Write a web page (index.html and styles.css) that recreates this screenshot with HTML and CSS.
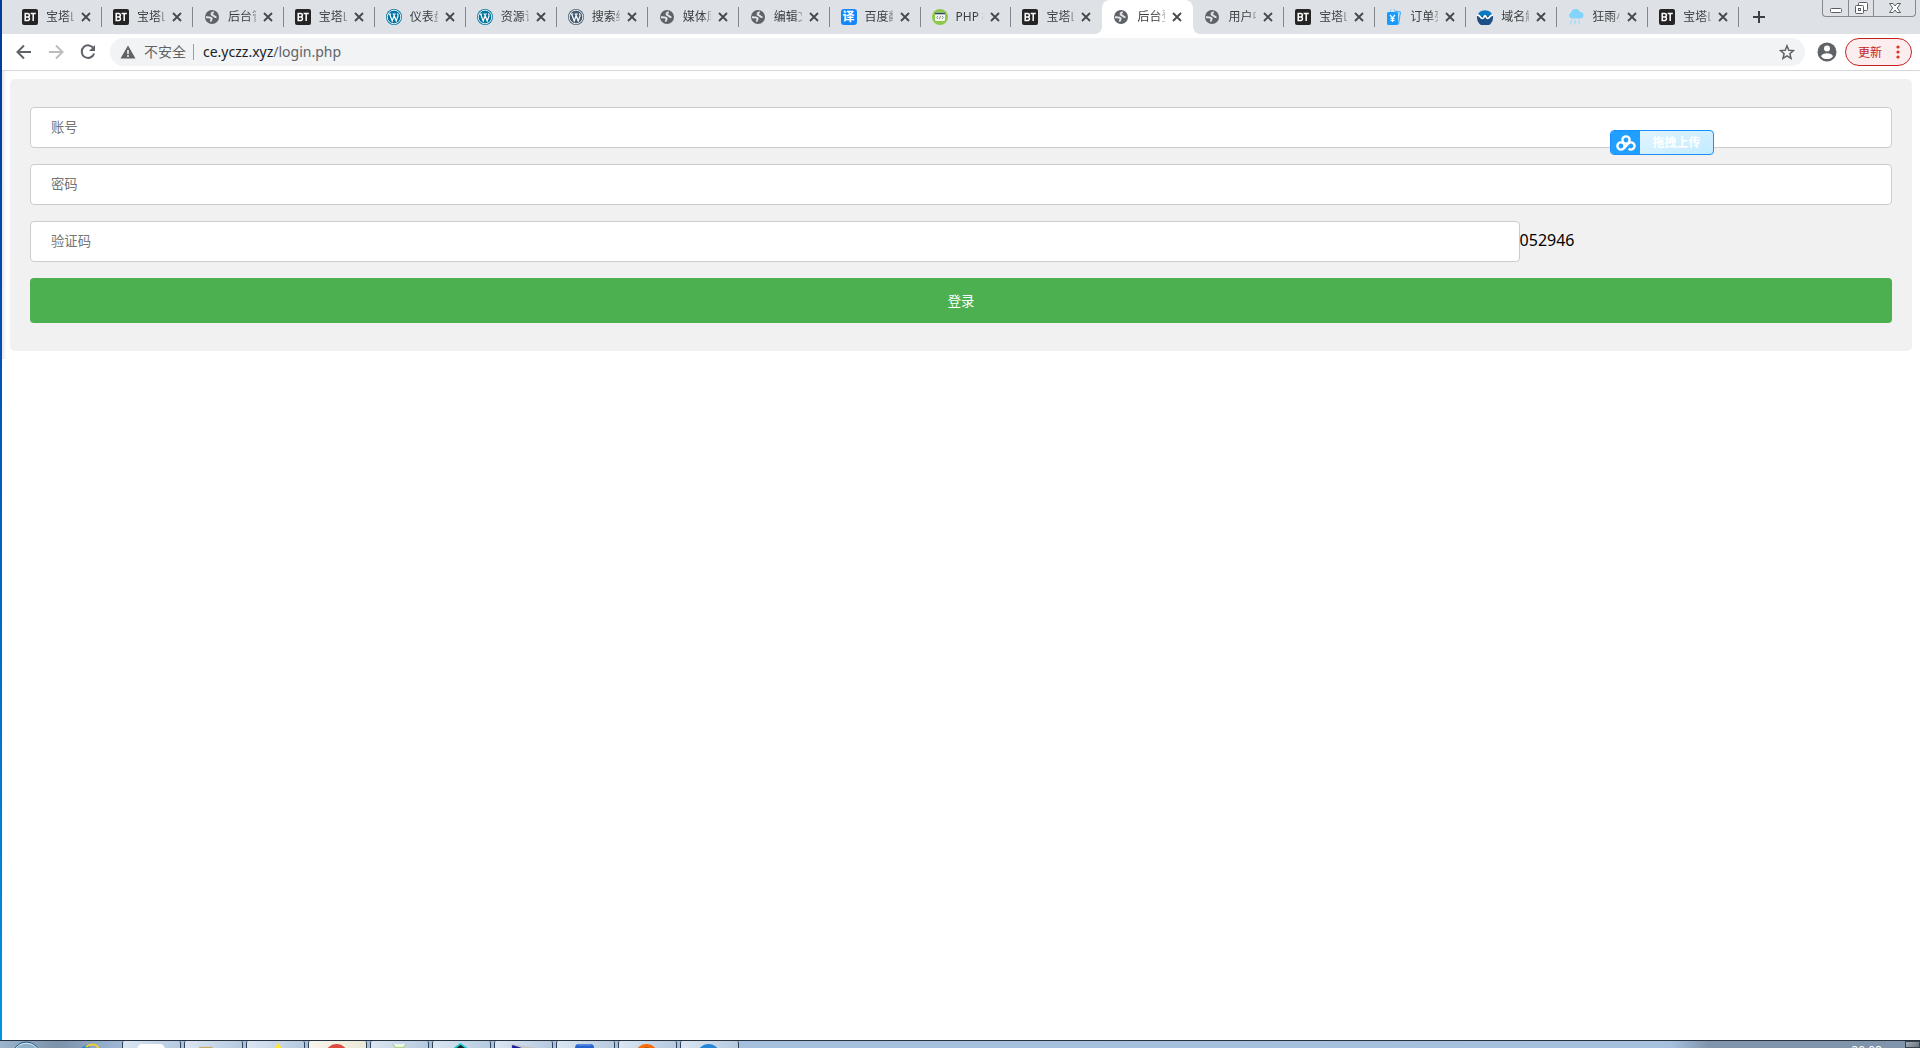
FILE: index.html
```html
<!DOCTYPE html>
<html lang="zh-CN">
<head>
    <meta charset="UTF-8">
    <meta name="viewport" content="width=device-width, initial-scale=1.0">
    <title>后台登录</title>
    <link rel="stylesheet" href="styles.css">
</head>
<body>
    <!-- shared icons -->
    <svg class="sprite" aria-hidden="true">
        <symbol id="bt" viewBox="0 0 16 16">
            <rect width="16" height="16" rx="2" fill="#242424"/>
            <path d="M3.2 4.5v7h2.2a1.8 1.8 0 0 0 .5-3.6a1.7 1.7 0 0 0-.5-3.4zM3.4 8h2.4M8.6 4.5h5.2M11.2 4.5v7.4" fill="none" stroke="#fff" stroke-width="1.5"/>
        </symbol>
        <symbol id="globe" viewBox="0 0 16 16">
            <circle cx="8" cy="8" r="7" fill="#5f6368"/>
            <path d="M9.800 3.200C7.200 3.600 6.800 5.800 8.800 6.200c1.700.3.900 2 3.700 1.900" fill="none" stroke="#e4e6ea" stroke-width="1.900"/>
            <path d="M2 8.300c2.400-.1 5-.2 5.600 1.100.4 1.300-1 1.300-.8 3.300" fill="none" stroke="#e4e6ea" stroke-width="1.900"/>
        </symbol>
        <symbol id="wp" viewBox="0 0 16 16">
            <circle cx="8" cy="8" r="8" fill="currentColor"/>
            <circle cx="8" cy="8" r="6.800" fill="none" stroke="#fff" stroke-width=".9"/>
            <path d="M2.200 5h3M6.600 5h3.200M3.700 5.200l2.500 6.800L8 7M7.700 5.200l2.500 6.800 1.800-5c.3-1-.6-1.600-.5-2.600" fill="none" stroke="#fff" stroke-width="1.200"/>
        </symbol>
        <symbol id="close" viewBox="0 0 16 16">
            <path d="M4 4l8 8M12 4l-8 8" stroke="#45494d" stroke-width="1.800"/>
        </symbol>
    </svg>

    <div class="window">
        <header class="browser">
            <div class="tab-strip">
                <nav class="tabs">
                    <div class="tab"><svg class="favicon"><use href="#bt"/></svg><a href="#">宝塔Linux面板</a><button aria-label="关闭"><svg><use href="#close"/></svg></button></div>
                    <div class="tab"><svg class="favicon"><use href="#bt"/></svg><a href="#">宝塔Linux面板</a><button aria-label="关闭"><svg><use href="#close"/></svg></button></div>
                    <div class="tab"><svg class="favicon"><use href="#globe"/></svg><a href="#">后台管理</a><button aria-label="关闭"><svg><use href="#close"/></svg></button></div>
                    <div class="tab"><svg class="favicon"><use href="#bt"/></svg><a href="#">宝塔Linux面板</a><button aria-label="关闭"><svg><use href="#close"/></svg></button></div>
                    <div class="tab"><svg class="favicon wp-blue"><use href="#wp"/></svg><a href="#">仪表盘</a><button aria-label="关闭"><svg><use href="#close"/></svg></button></div>
                    <div class="tab"><svg class="favicon wp-blue"><use href="#wp"/></svg><a href="#">资源订阅</a><button aria-label="关闭"><svg><use href="#close"/></svg></button></div>
                    <div class="tab"><svg class="favicon wp-gray"><use href="#wp"/></svg><a href="#">搜索结果</a><button aria-label="关闭"><svg><use href="#close"/></svg></button></div>
                    <div class="tab"><svg class="favicon"><use href="#globe"/></svg><a href="#">媒体库</a><button aria-label="关闭"><svg><use href="#close"/></svg></button></div>
                    <div class="tab"><svg class="favicon"><use href="#globe"/></svg><a href="#">编辑文章</a><button aria-label="关闭"><svg><use href="#close"/></svg></button></div>
                    <div class="tab"><span class="favicon fanyi">译</span><a href="#">百度翻译</a><button aria-label="关闭"><svg><use href="#close"/></svg></button></div>
                    <div class="tab">
                        <svg class="favicon" viewBox="0 0 16 16">
                            <circle cx="8" cy="8" r="8" fill="#8cc84b"/>
                            <rect x="3" y="3.500" width="10" height="8.500" rx="1" fill="#f3f5f0"/>
                            <path d="M3 4.500h10" stroke="#34495e" stroke-width="1.600"/>
                            <path d="M6 7L4.700 8.500 6 10M10 7l1.300 1.500L10 10M8.600 7l-1.200 3" fill="none" stroke="#777" stroke-width=".8"/>
                        </svg>
                        <a href="#">PHP 教程</a><button aria-label="关闭"><svg><use href="#close"/></svg></button>
                    </div>
                    <div class="tab before-active"><svg class="favicon"><use href="#bt"/></svg><a href="#">宝塔Linux面板</a><button aria-label="关闭"><svg><use href="#close"/></svg></button></div>
                    <div class="tab active"><svg class="favicon"><use href="#globe"/></svg><a href="#">后台登录</a><button aria-label="关闭"><svg><use href="#close"/></svg></button></div>
                    <div class="tab"><svg class="favicon"><use href="#globe"/></svg><a href="#">用户中心</a><button aria-label="关闭"><svg><use href="#close"/></svg></button></div>
                    <div class="tab"><svg class="favicon"><use href="#bt"/></svg><a href="#">宝塔Linux面板</a><button aria-label="关闭"><svg><use href="#close"/></svg></button></div>
                    <div class="tab">
                        <svg class="favicon" viewBox="0 0 16 16">
                            <path d="M9 2l5.500 1-2 12.500" fill="#b7defb" stroke="#169bff" stroke-width=".8"/>
                            <path d="M4.500 3V1.500a2 2 0 0 1 4 0V3" fill="none" stroke="#8ccdfb"/>
                            <rect x="1" y="3" width="11" height="13" rx="1.500" fill="#169bff"/>
                            <path d="M4 6l2.500 3L9 6M6.500 9v4M4.500 9.500h4M4.500 11.300h4" fill="none" stroke="#fff" stroke-width="1.200"/>
                        </svg>
                        <a href="#">订单列表</a><button aria-label="关闭"><svg><use href="#close"/></svg></button>
                    </div>
                    <div class="tab">
                        <svg class="favicon" viewBox="0 0 16 16">
                            <path d="M.2 7.500a8 8 0 0 1 15.600 0z" fill="#0b78c4"/>
                            <path d="M0 7h16v2a8 8 0 0 1-16 0z" fill="#1c4f86"/>
                            <path d="M0 6.200c3-.8 3.500 3.300 5.500 3.300S7 6.500 8 6.500s1 3 2.800 3S13 5.400 16 6.200" fill="none" stroke="#fff" stroke-width="1.700"/>
                        </svg>
                        <a href="#">域名解析</a><button aria-label="关闭"><svg><use href="#close"/></svg></button>
                    </div>
                    <div class="tab">
                        <svg class="favicon" viewBox="0 0 16 16">
                            <path d="M4 9.500a3 3 0 0 1-1-5.800A4.700 4.700 0 0 1 12 3a3.300 3.300 0 0 1 1 6.500z" fill="#83d4fc"/>
                            <path d="M4 11l-2 2h2l-2 2.500M8 11l-2 2h2l-2 2.500M12 11l-2 2h2l-2 2.500" fill="none" stroke="#9bdcfb"/>
                        </svg>
                        <a href="#">狂雨小说</a><button aria-label="关闭"><svg><use href="#close"/></svg></button>
                    </div>
                    <div class="tab"><svg class="favicon"><use href="#bt"/></svg><a href="#">宝塔Linux面板</a><button aria-label="关闭"><svg><use href="#close"/></svg></button></div>
                </nav>
                <button class="new-tab" aria-label="新标签页">
                    <svg viewBox="0 0 16 16"><path d="M8 2v12M2 8h12" stroke="#3c4043" stroke-width="2"/></svg>
                </button>
                <div class="window-buttons">
                    <button aria-label="最小化"><svg viewBox="0 0 14 14"><rect x="1.500" y="7.500" width="11" height="4" rx="1" fill="#fff" stroke="#5a5e63"/></svg></button>
                    <button aria-label="还原"><svg viewBox="0 0 14 14"><g fill="#fff" stroke="#5a5e63"><rect x="4.500" y="1.500" width="9" height="8" rx="1"/><rect x="1.500" y="4.500" width="8" height="8" rx="1"/><rect x="4.500" y="7.500" width="2" height="2"/></g></svg></button>
                    <button class="wide" aria-label="关闭窗口"><svg viewBox="0 0 14 14"><path d="M1.500 2.500h3.500l2 2.500 2-2.500h3.500L9.300 7l3.200 4.500H9L7 9l-2 2.500H1.500L4.700 7z" fill="#fff" stroke="#5a5e63"/></svg></button>
                </div>
            </div>

            <div class="toolbar">
                <button class="nav-button" aria-label="后退"><svg viewBox="0 0 16 16"><path d="M15 8H2M8 1.500L1.500 8 8 14.500" fill="none" stroke="#5f6368" stroke-width="2"/></svg></button>
                <button class="nav-button" aria-label="前进"><svg viewBox="0 0 16 16"><path d="M1 8h13M8 1.500L14.500 8 8 14.500" fill="none" stroke="#babcbe" stroke-width="2"/></svg></button>
                <button class="nav-button" aria-label="刷新"><svg viewBox="0 0 16 16"><path d="M13.600 4.600A6.300 6.300 0 1 0 14.100 9.500" fill="none" stroke="#5f6368" stroke-width="2"/><path d="M15 1v6H9z" fill="#5f6368"/></svg></button>
                <div class="omnibox">
                    <svg class="warning" viewBox="0 0 16 16"><path d="M8 1.500L15.500 14.500H.5z" fill="#5f6368"/><path d="M8 6v4M8 11v2" stroke="#f1f3f4" stroke-width="1.600"/></svg>
                    <span class="insecure">不安全</span>
                    <a class="url" href="#">ce.yczz.xyz<span>/login.php</span></a>
                    <button class="star" aria-label="收藏"><svg viewBox="0 0 16 16"><path d="M8 1.800l1.800 4.400 4.700.4-3.600 3.100 1.100 4.600L8 11.800l-4 2.500 1.100-4.600-3.600-3.100 4.700-.4z" fill="none" stroke="#5f6368" stroke-width="1.500"/></svg></button>
                </div>
                <button class="profile" aria-label="用户">
                    <svg viewBox="0 0 20 20"><circle cx="10" cy="10" r="9.500" fill="#5f6368"/><circle cx="10" cy="6.500" r="3" fill="#fff"/><path d="M4 14.200c1.200-4 10.800-4 12 0-2.500 3.800-9.500 3.800-12 0z" fill="#fff"/></svg>
                </button>
                <button class="update">更新<svg viewBox="0 0 4 14"><g fill="#d93025"><circle cx="2" cy="2" r="1.600"/><circle cx="2" cy="7" r="1.600"/><circle cx="2" cy="12" r="1.600"/></g></svg></button>
            </div>
        </header>

        <main>
            <form class="login">
                <input type="text" name="username" placeholder="账号" aria-label="账号">
                <input type="password" name="password" placeholder="密码" aria-label="密码">
                <div class="code-row">
                    <input type="text" name="code" placeholder="验证码" aria-label="验证码">
                    <span>052946</span>
                </div>
                <button type="submit">登录</button>
            </form>
        </main>

        <!-- floating upload widget -->
        <div class="upload">
            <span class="upload-logo"><svg viewBox="0 0 20 16"><g fill="none" stroke="#fff" stroke-width="2.400"><circle cx="10" cy="5" r="3.600"/><circle cx="5" cy="11" r="3.600"/><path d="M7.800 13.500l4.600-5a3.600 3.600 0 1 1 .2 5.200"/></g></svg></span>
            <span class="upload-text">拖拽上传</span>
        </div>
    </div>

    <footer class="taskbar">
        <svg class="start" viewBox="0 0 122 7">
            <circle cx="27" cy="15" r="14" fill="#8fb0c9" stroke="#1e4f7c"/>
            <path d="M15 9a14 14 0 0 1 24 0" fill="none" stroke="#d9edf7"/>
            <path d="M84 8c3-2 5-3 8-3" stroke="#2d86cf" stroke-width="3" fill="none"/>
            <path d="M88 6c6-4 12-3 13 2" stroke="#f5cf2e" stroke-width="2" fill="none"/>
        </svg>
        <button aria-label="窗口 1"><svg viewBox="0 0 60 7"><rect x="15" y="3" width="29" height="12" rx="5" fill="#fff"/></svg></button>
        <button aria-label="窗口 2"><svg viewBox="0 0 60 7"><path d="M15 6h14v2H15z" fill="#c9a95c"/></svg></button>
        <button aria-label="窗口 3"><svg viewBox="0 0 60 7"><path d="M33 2l4 6h-9z" fill="#ffe92e"/></svg></button>
        <button class="current" aria-label="窗口 4"><svg viewBox="0 0 60 7"><circle cx="29" cy="15" r="12" fill="#dd4b3e"/></svg></button>
        <button aria-label="窗口 5"><svg viewBox="0 0 60 7"><path d="M23 3l3 4h8l3-4" fill="#eff7e5" stroke="#9cc653"/></svg></button>
        <button aria-label="窗口 6"><svg viewBox="0 0 60 7"><path d="M29 2l10 7H19z" fill="#18c6c9"/><path d="M29 4l7 5H22z" fill="#142124"/></svg></button>
        <button aria-label="窗口 7"><svg viewBox="0 0 60 7"><path d="M17 3l26 4v2H17z" fill="#c5c5c5"/><path d="M18 4l13 4H18z" fill="#1718a5"/></svg></button>
        <button aria-label="窗口 8"><svg viewBox="0 0 60 7"><rect x="19" y="3" width="20" height="12" rx="4" fill="#2563cf"/><path d="M22 4h14" stroke="#78a9f0"/></svg></button>
        <button aria-label="窗口 9"><svg viewBox="0 0 60 7"><circle cx="29" cy="15" r="12" fill="#fb6c0a"/><circle cx="29" cy="11" r="5" fill="#b95823"/></svg></button>
        <button aria-label="窗口 10"><svg viewBox="0 0 60 7"><circle cx="29" cy="15" r="12" fill="#2586d8"/></svg></button>
        <span class="clock">20:08</span>
        <span class="show-desktop"></span>
    </footer>
</body>
</html>
```
FILE: styles.css
```css
* {
    box-sizing: border-box;
}

body {
    display: flex;
    flex-direction: column;
    height: 100vh;
    margin: 0;
    overflow: hidden;
    background-color: #fff;
    font-family: "Noto Sans", "Noto Sans CJK SC", sans-serif;
}

a {
    color: inherit;
    text-decoration: none;
}

button {
    padding: 0;
    border: none;
    background: none;
    font-family: inherit;
    cursor: pointer;
}

svg {
    display: block;
}

.sprite {
    display: none;
}

.window {
    position: relative;
    flex: 1;
    min-height: 0;
    border-left: 2px solid;
    border-image: linear-gradient(#003a96, #0052b4 35%, #0092e2) 1;
}

/* tabs */
.tab-strip {
    display: flex;
    height: 34px;
    padding: 0 4px 0 9px;
    background-color: #dee1e6;
}

.tabs {
    display: flex;
    flex: 1;
    min-width: 0;
}

.tab {
    position: relative;
    display: flex;
    flex: 1;
    align-items: center;
    min-width: 0;
    padding-left: 11px;
}

.tab::after {
    content: "";
    width: 1px;
    height: 20px;
    margin-left: 7px;
    background-color: #80868b;
}

.tab.active::after,
.before-active::after {
    background-color: transparent;
}

.tab.active {
    background-color: #fff;
    border-radius: 8px 8px 0 0;
}

/* curved feet of the open tab */
.tab.active::before {
    content: "";
    position: absolute;
    left: -8px;
    right: -8px;
    bottom: 0;
    height: 8px;
    background:
        radial-gradient(circle at 0 0, transparent 8px, #fff 8px) left / 8px 8px no-repeat,
        radial-gradient(circle at 8px 0, transparent 8px, #fff 8px) right / 8px 8px no-repeat;
}

.favicon {
    flex: none;
    width: 16px;
    height: 16px;
}

.wp-blue {
    color: #0073a0;
}

.wp-gray {
    color: #465b70;
}

.fanyi {
    border-radius: 3px;
    background-color: #1687fa;
    color: #fff;
    font-size: 12px;
    font-weight: bold;
    line-height: 15px;
    text-align: center;
}

.tab a {
    flex: 1;
    min-width: 0;
    margin: 0 4px 0 8px;
    overflow: hidden;
    color: #3c4043;
    font-size: 12px;
    line-height: 20px;
    white-space: nowrap;
    mask-image: linear-gradient(to right, #000 20px, transparent 32px);
}

.tab button,
.tab button svg {
    flex: none;
    width: 16px;
    height: 16px;
}

.new-tab {
    width: 16px;
    margin: 0 55px 0 12px;
}

.new-tab svg {
    width: 16px;
}

.window-buttons {
    display: flex;
    height: 17px;
    border: 1px solid #868a90;
    border-top: none;
    border-radius: 0 0 4px 4px;
}

.window-buttons button {
    display: flex;
    align-items: center;
    justify-content: center;
    width: 25px;
}

.window-buttons button + button {
    border-left: 1px solid #868a90;
}

.window-buttons .wide {
    width: 42px;
}

.window-buttons svg {
    width: 14px;
    height: 14px;
}

/* toolbar */
.toolbar {
    display: flex;
    align-items: center;
    height: 37px;
    padding: 0 8px 0 14px;
    border-bottom: 1px solid #d6d7da;
}

.nav-button {
    width: 16px;
    margin-right: 16px;
}

.nav-button svg {
    width: 16px;
}

.nav-button:nth-child(3) {
    margin-right: 14px;
}

.omnibox {
    display: flex;
    flex: 1;
    align-items: center;
    height: 28px;
    margin-right: 12px;
    padding: 0 10px;
    border-radius: 14px;
    background-color: #f1f3f4;
    color: #5f6368;
    font-size: 14px;
    line-height: 20px;
}

.warning {
    width: 16px;
    margin-right: 8px;
}

.insecure {
    padding-right: 7px;
    margin-right: 9px;
    border-right: 1px solid #9a9da1;
    line-height: 16px;
}

.url {
    flex: 1;
    color: #202124;
}

.url span {
    color: #5f6368;
}

.star svg {
    width: 16px;
}

.profile {
    width: 20px;
    margin-right: 8px;
}

.update {
    display: flex;
    align-items: center;
    justify-content: space-between;
    width: 67px;
    height: 28px;
    padding: 0 11px 0 12px;
    border: 1px solid #c5221f;
    border-radius: 14px;
    background-color: #fceeee;
    color: #c5221f;
    font-size: 12px;
}

.update svg {
    width: 4px;
}

/* login page */
main {
    padding: 8px;
    box-shadow: inset 4px 0 4px -3px #d8d8dc;
}

.login {
    display: flex;
    flex-direction: column;
    gap: 16px;
    padding: 28px 20px;
    border-radius: 5px;
    background-color: #f1f1f1;
}

.login input {
    width: 100%;
    height: 41px;
    padding: 11px 20px 13px;
    border: 1px solid #ccc;
    border-radius: 4px;
    font-family: inherit;
    line-height: 15px;
}

.code-row {
    display: flex;
    align-items: center;
}

.code-row input {
    width: 80%;
}

.code-row span {
    padding-bottom: 4px;
    font-size: 16px;
    line-height: 20px;
}

.login button {
    padding: 15px 20px 13px;
    border-radius: 4px;
    background-color: #4caf50;
    color: #fff;
    line-height: 17px;
}

.login button:hover {
    background-color: #45a049;
}

.upload {
    position: absolute;
    top: 130px;
    right: 206px;
    display: flex;
    width: 104px;
    height: 25px;
    overflow: hidden;
    border: 1px solid #1890ff;
    border-radius: 4px;
    background: linear-gradient(160deg, #e8f7ff, #c2ebff);
}

.upload-logo {
    display: flex;
    align-items: center;
    justify-content: center;
    width: 29px;
    background-color: #219fff;
}

.upload-logo svg {
    width: 20px;
    height: 16px;
}

.upload-text {
    flex: 1;
    color: #fff;
    font-size: 12px;
    font-weight: bold;
    line-height: 23px;
    text-align: center;
}

/* taskbar */
.taskbar {
    display: flex;
    flex: none;
    gap: 3px;
    height: 8px;
    overflow: hidden;
    border-top: 1px solid #28323e;
    background: linear-gradient(to right, #9bb5cf, #7c91aa 3%, #a4c0df 7%, #a6c1df 87%, #8094ab 89%);
}

.start {
    width: 119px;
    height: 7px;
}

.taskbar button {
    width: 59px;
    border: 1px solid #334155;
    border-width: 0 1px;
    border-radius: 2px 2px 0 0;
    background: linear-gradient(100deg, #dbe6f2, #b5c9df);
}

.taskbar button svg {
    width: 57px;
    height: 7px;
}

.taskbar .current {
    background: linear-gradient(100deg, #f7f5ec, #ebe9d6);
}

.clock {
    margin: 4px 20px 0 auto;
    color: #fff;
    font-size: 12px;
    line-height: 12px;
}

.show-desktop {
    width: 15px;
    border: 1px solid #39434e;
    background: linear-gradient(135deg, #a4adb6, #68737e);
}
```
